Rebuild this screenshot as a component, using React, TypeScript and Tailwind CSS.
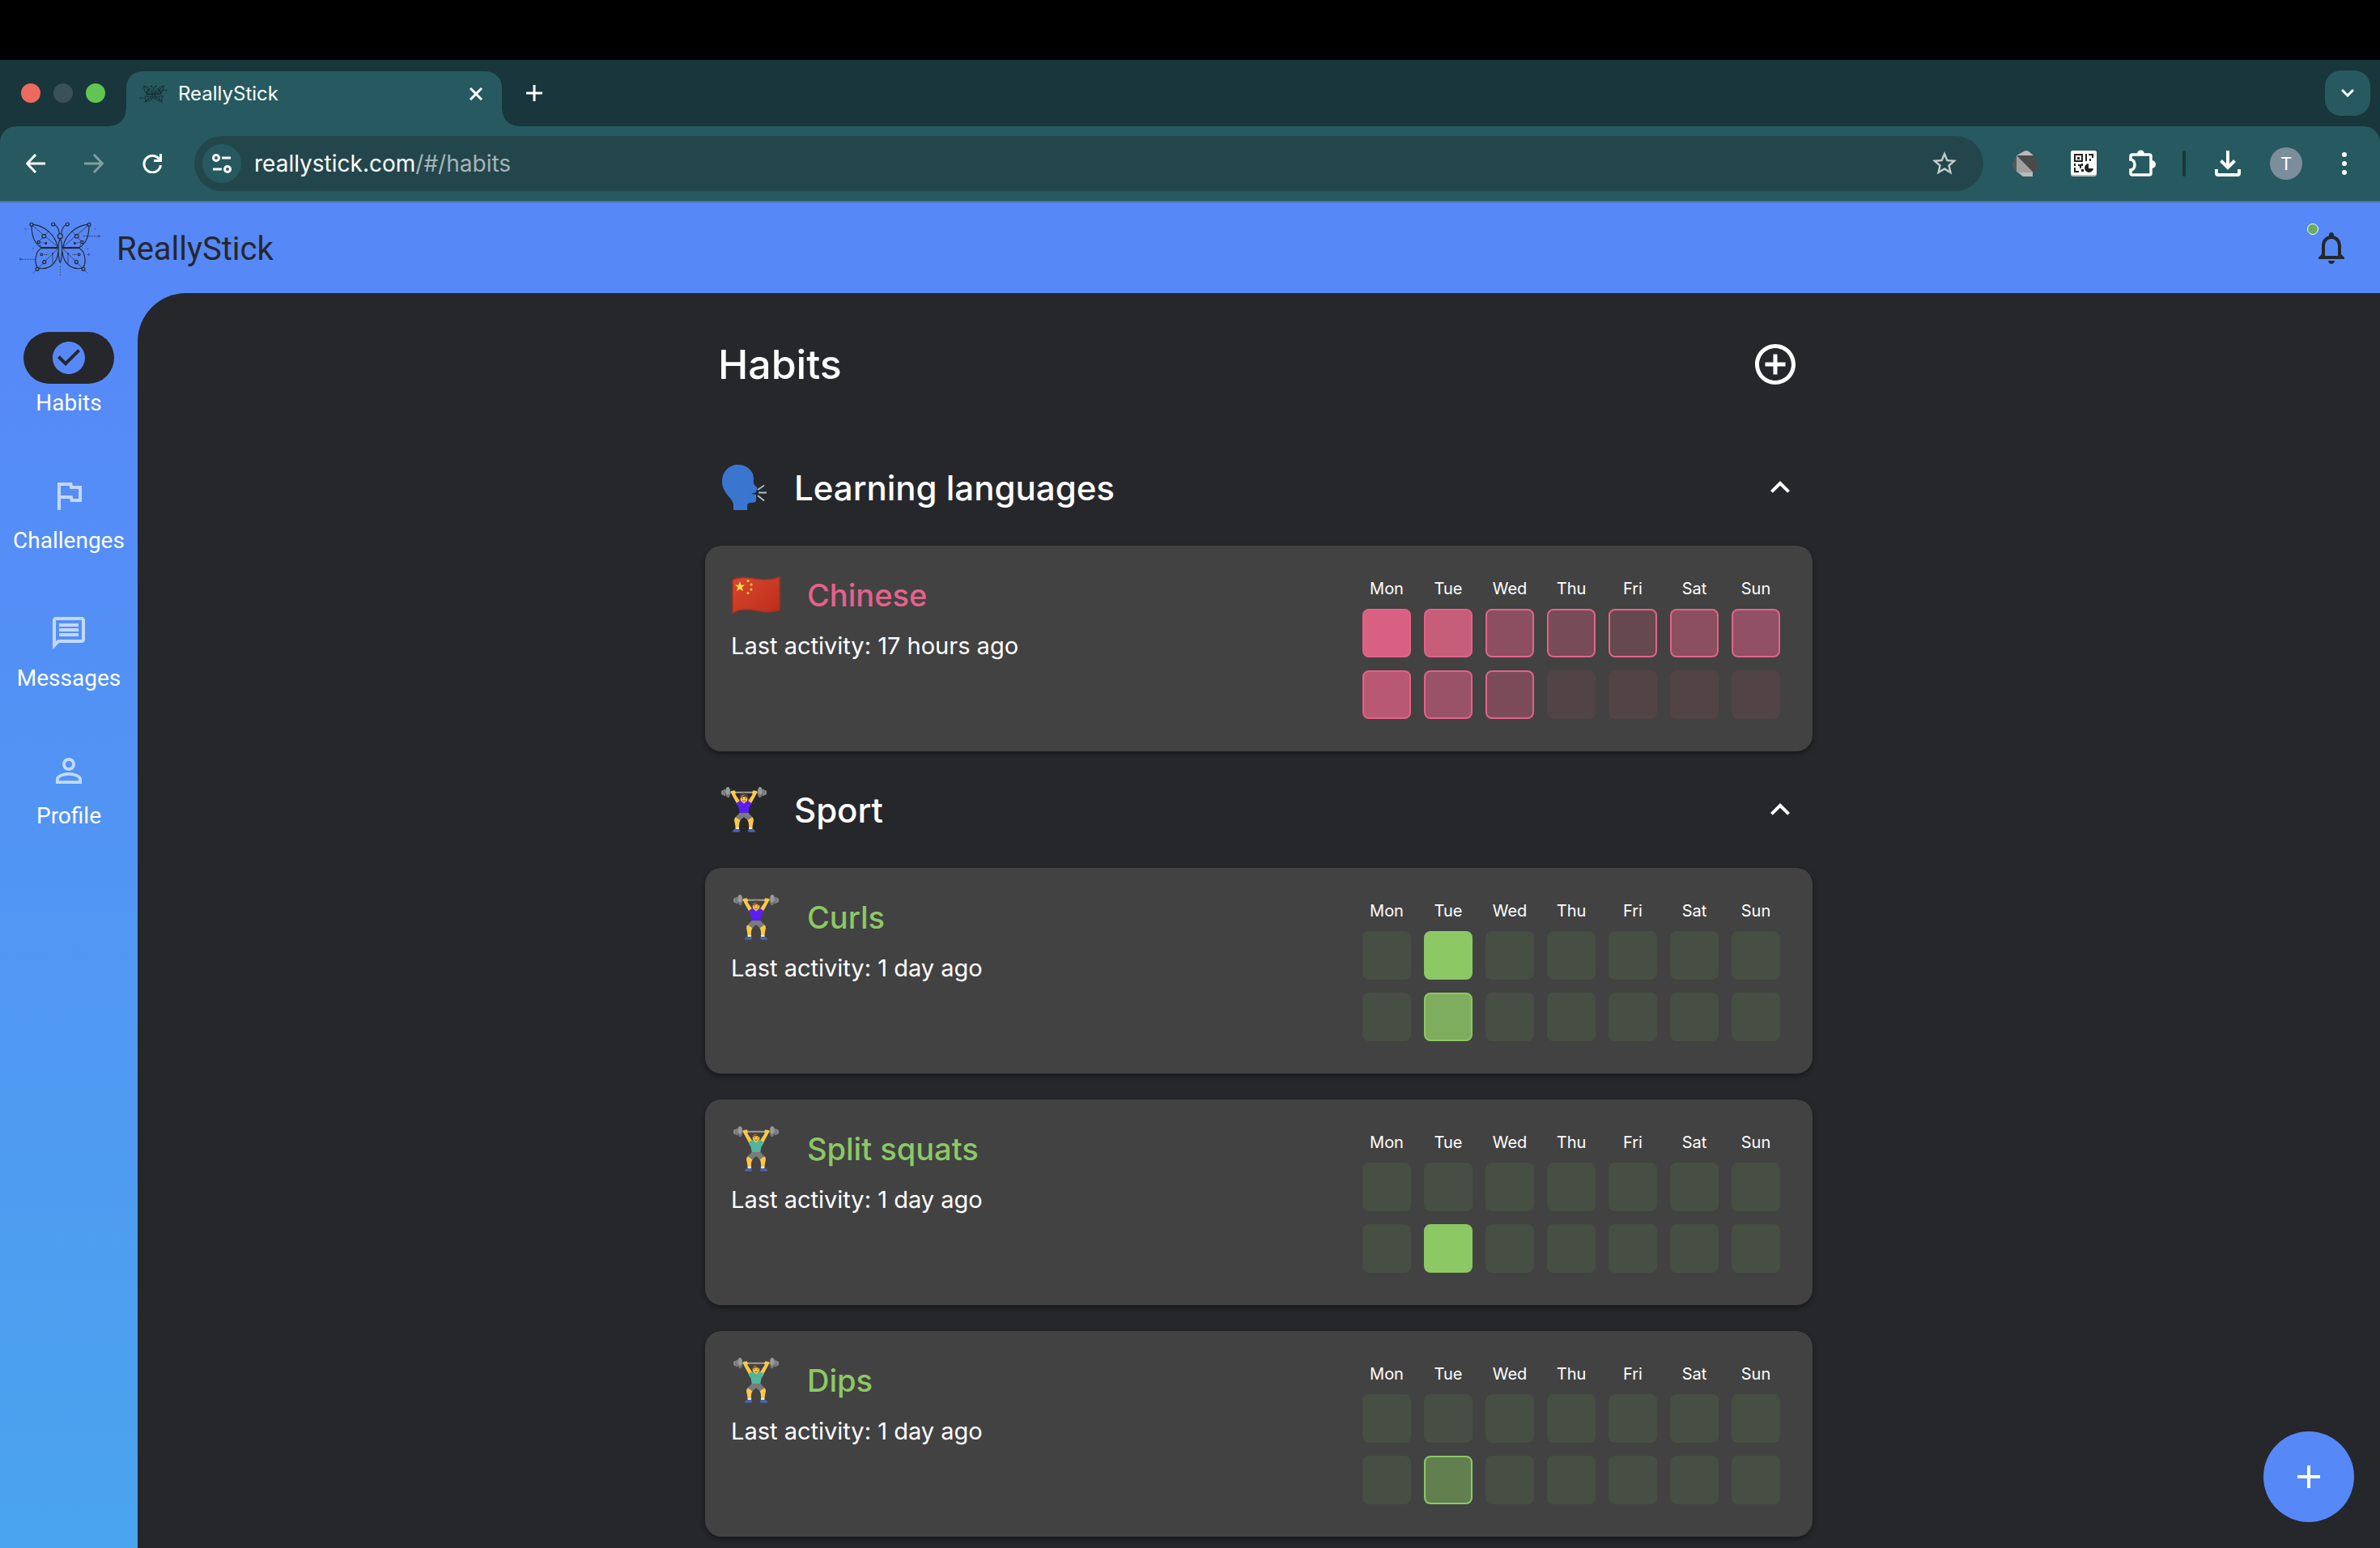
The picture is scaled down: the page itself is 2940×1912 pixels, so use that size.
import React from "react";
import {
  MdAdd,
  MdAddCircleOutline,
  MdCheckCircle,
  MdExpandLess,
  MdNotificationsNone,
  MdOutlineFlag,
  MdOutlineMessage,
  MdPersonOutline,
  MdStarBorder,
} from "react-icons/md";

type Tone = "pink" | "green";

interface Habit {
  name: string;
  icon: React.ReactNode;
  activity: string;
  tone: Tone;
  weeks: string[][];
}

const DAYS = ["Mon", "Tue", "Wed", "Thu", "Fri", "Sat", "Sun"];

const P0 = "bg-[#514346]";
const G0 = "bg-[#474e43]";
const PB = "border-[#e5628a]";
const GB = "border-[#8cc864]";

function Butterfly({ className }: { className: string }) {
  const half = (
    <g>
      <path d="M92 49C132 52 176 86 184 134L122 134C96 116 88 92 87 55" />
      <path d="M184 137H122C100 150 96 192 110 210C142 218 180 204 186 150" />
      <path d="M190 83C188 66 182 54 172 50" />
      <g strokeWidth="2">
        <path d="M91 53L184 132M133 92L152 72M133 92L113 114L122 130M184 139L110 212M165 157V194" />
        <path strokeDasharray="5 3" d="M113 114L140 118M124 160H150M103 220L90 232" />
      </g>
      <g fill="#5688f8">
        <circle cx="87" cy="49" r="6" />
        <circle cx="167" cy="48" r="6" />
        <circle cx="133" cy="92" r="7" />
        <circle cx="113" cy="114" r="5" />
        <circle cx="140" cy="118" r="3" />
        <circle cx="124" cy="160" r="4" />
        <circle cx="134" cy="188" r="6" />
        <circle cx="108" cy="214" r="6" />
      </g>
      <circle cx="141" cy="160" r="2" fill="currentColor" stroke="none" />
      <circle cx="165" cy="157" r="3" fill="currentColor" stroke="none" />
    </g>
  );
  return (
    <svg viewBox="0 0 390 270" className={className} fill="none" stroke="currentColor" strokeWidth="3.5" aria-hidden="true">
      {half}
      <g transform="translate(387 0) scale(-1 1)">{half}</g>
      <path fill="#5688f8" d="M193 102C184 112 184 172 193 190C202 172 202 112 193 102Z" />
      <circle cx="193" cy="92" r="9" fill="#5688f8" />
      <g strokeWidth="2">
        <circle cx="337" cy="92" r="3" />
        <circle cx="46" cy="177" r="3" />
        <circle cx="299" cy="160" r="3" />
        <circle cx="65" cy="65" r="3" opacity="0.5" />
        <path strokeDasharray="7 3" d="M50 178H102M278 92H333" />
        <path strokeDasharray="3 7" strokeWidth="3" d="M193 204V240" />
        <path strokeDasharray="3 5" opacity="0.4" d="M65 74V96" />
      </g>
      <g fill="currentColor" stroke="none" opacity="0.7">
        <circle cx="93" cy="138" r="2" />
        <circle cx="322" cy="65" r="2" />
        <circle cx="295" cy="138" r="2" />
      </g>
    </svg>
  );
}

function SpeakingHead() {
  return (
    <svg viewBox="0 0 56 56" className="size-14" aria-hidden="true">
      <path
        fill="#3a76d0"
        d="M15 56V50C15 41 1 36 1 21C1 8 10 0 21 0C32 0 40 8 40 17C39 24 41 25 44 28C45 30 44 31 43 32V34L37 36L43 37V43C43 48 40 46 36 47C33 47 32 49 32 51V56Z"
      />
      <path stroke="#a9c0c6" strokeWidth="1.8" d="M45 31L53 25.500M46 34.500H56M45 38L53 44.500" />
    </svg>
  );
}

function WeightLifter({ shirt, hair }: { shirt: string; hair: "long" | "short" }) {
  const weight = (
    <g>
      <ellipse cx="5" cy="21" rx="5" ry="9" fill="#8a8a8a" />
      <ellipse cx="12" cy="21" rx="6" ry="13" fill="#7c7c7c" />
      <ellipse cx="25" cy="20" rx="9" ry="20" fill="#757575" />
      <ellipse cx="24" cy="15" rx="8" ry="14" fill="#9a9a9a" />
    </g>
  );
  const limb = (
    <g>
      <path fill="#fdc847" d="M36 15L50 13Q56 20 52 27L70 54L58 63L40 30Q34 22 36 15Z" />
      <path fill="#fdc847" d="M55 110L72 121Q64 134 66 154H53Q52 140 48 124Q48 114 55 110Z" />
      <path fill="#e8e8e8" d="M53 150H66V158H53Z" />
      <path fill="#4666ae" d="M42 167Q42 157 54 156H68V167Z" />
    </g>
  );
  return (
    <svg viewBox="0 0 168 168" className="size-14" aria-hidden="true">
      <path fill="#9e9e9e" d="M30 17H138V23H30Z" />
      {weight}
      <g transform="translate(168 0) scale(-1 1)">{weight}</g>
      <path
        fill="#5b3b33"
        d={hair === "long" ? "M66 56Q64 22 84 22Q104 22 102 56Z" : "M69 42Q66 24 84 24Q102 24 99 42Z"}
      />
      {limb}
      <g transform="translate(168 0) scale(-1 1)">{limb}</g>
      <path fill={shirt} d="M55 61L69 51Q84 60 99 51L113 61L103 78L100 97H68L65 78Z" />
      <path fill="#fdc847" d="M76 52H92L84 62Z" />
      <ellipse cx="84" cy="44" rx="13" ry="14" fill="#fdc847" />
      <path fill="#5b3b33" d="M70 42Q72 32 92 29Q98 32 98 42Q92 36 84 36Q74 37 70 42Z" />
      <circle cx="78" cy="42" r="2" fill="#4a3530" />
      <circle cx="90" cy="42" r="2" fill="#4a3530" />
      <path stroke="#7b4a30" strokeWidth="2.500" fill="none" d="M78 50Q84 55 90 50" />
      <path fill="#7a7a7a" d="M68 96H100L115 112L98 124L84 112L70 124L53 112Z" />
    </svg>
  );
}

function ChinaFlag() {
  return (
    <svg viewBox="0 0 60 46" className="w-[60px]" aria-hidden="true">
      <defs>
        <linearGradient id="flag" x1="0" y1="0" x2="1" y2="1">
          <stop offset="0" stopColor="#d9492d" />
          <stop offset="1" stopColor="#bb2c1c" />
        </linearGradient>
      </defs>
      <path
        fill="url(#flag)"
        stroke="#a83222"
        strokeWidth="1.500"
        d="M1 4C10 0 18 1 29 3C40 5 50 4 59 1V41C50 45 41 44 30 42C18 40 10 40 1 45Z"
      />
      <path fill="#fbe04a" d="M10 6L11.500 10.500L16 10.500L12.500 13.500L14 18L10 15.500L6 18L7.500 13.500L4 10.500L8.500 10.500Z" />
      <g fill="#f5c33b">
        <circle cx="20" cy="5.500" r="1.600" />
        <circle cx="24" cy="10" r="1.600" />
        <circle cx="24" cy="16" r="1.600" />
        <circle cx="20" cy="20.500" r="1.600" />
      </g>
    </svg>
  );
}

const row = (empty: string, filled: Record<number, string> = {}) => DAYS.map((_, i) => filled[i] ?? empty);

const woman = <WeightLifter shirt="#5a1ff0" hair="long" />;
const man = <WeightLifter shirt="#52b59c" hair="short" />;

const SECTIONS: { title: string; icon: React.ReactNode; habits: Habit[] }[] = [
  {
    title: "Learning languages",
    icon: <SpeakingHead />,
    habits: [
      {
        name: "Chinese",
        icon: <ChinaFlag />,
        activity: "Last activity: 17 hours ago",
        tone: "pink",
        weeks: [
          ["bg-[#d86082]", "bg-[#c65d79]", "bg-[#8b4f61]", "bg-[#784b59]", "bg-[#664850]", "bg-[#8b4f61]", "bg-[#915065]"],
          row(P0, { 0: "bg-[#b95873]", 1: "bg-[#995268]", 2: "bg-[#7c4b5a]" }),
        ],
      },
    ],
  },
  {
    title: "Sport",
    icon: woman,
    habits: [
      {
        name: "Curls",
        icon: woman,
        activity: "Last activity: 1 day ago",
        tone: "green",
        weeks: [row(G0, { 1: "bg-[#8cc864]" }), row(G0, { 1: "bg-[#7ead5d]" })],
      },
      {
        name: "Split squats",
        icon: man,
        activity: "Last activity: 1 day ago",
        tone: "green",
        weeks: [row(G0), row(G0, { 1: "bg-[#8cc864]" })],
      },
      {
        name: "Dips",
        icon: man,
        activity: "Last activity: 1 day ago",
        tone: "green",
        weeks: [row(G0), row(G0, { 1: "bg-[#627f50]" })],
      },
    ],
  },
];

function HabitCard({ habit }: { habit: Habit }) {
  const border = habit.tone === "pink" ? PB : GB;
  return (
    <article className="flex items-start justify-between rounded-[20px] bg-[#424242] shadow-[0_3px_6px_rgba(0,0,0,0.4)]">
      <div className="flex flex-col gap-3 pt-8 pl-8">
        <div className="flex h-[58px] items-center gap-8">
          <span className="flex w-[62px] justify-center">{habit.icon}</span>
          <h3
            className={
              habit.tone === "pink"
                ? "text-[38px] leading-[44px] font-medium text-[#e5628a]"
                : "text-[38px] leading-[44px] font-medium text-[#8cc864]"
            }
          >
            {habit.name}
          </h3>
        </div>
        <p className="text-[29px] leading-[44px]">{habit.activity}</p>
      </div>
      <table className="m-6 border-separate border-spacing-4">
        <thead>
          <tr>
            {DAYS.map((d) => (
              <th key={d} scope="col" className="h-[22px] w-[60px] min-w-[60px] p-0 pt-1 text-center text-[20px] leading-[18px] font-normal">
                {d}
              </th>
            ))}
          </tr>
        </thead>
        <tbody>
          {habit.weeks.map((week, w) => (
            <tr key={w}>
              {week.map((cell, i) => (
                <td key={i} className="p-0">
                  <div
                    className={
                      cell === P0 || cell === G0
                        ? `size-[60px] rounded-lg ${cell}`
                        : `size-[60px] rounded-lg border-2 ${border} ${cell}`
                    }
                  />
                </td>
              ))}
            </tr>
          ))}
        </tbody>
      </table>
    </article>
  );
}

function TabStrip() {
  return (
    <div className="flex h-[82px] items-center bg-[#18363b]">
      <div className="flex w-[156px] gap-4 pl-[26px]">
        <button aria-label="Close window" className="size-6 rounded-full bg-[#ed6a5e]" />
        <button aria-label="Minimize window" className="size-6 rounded-full bg-[#395257]" />
        <button aria-label="Zoom window" className="size-6 rounded-full bg-[#61c554]" />
      </div>
      <div className="relative flex h-[68px] w-[464px] items-center self-end rounded-t-[20px] bg-[#265a60] pr-6 pb-3 pl-3">
        <span className="absolute bottom-0 -left-5 size-5 bg-[radial-gradient(circle_at_0_0,#18363b_19px,#265a60_20px)]" />
        <span className="absolute -right-5 bottom-0 size-5 bg-[radial-gradient(circle_at_100%_0,#18363b_19px,#265a60_20px)]" />
        <Butterfly className="w-11 text-[#102326] [&_circle]:fill-none [&_g]:stroke-[7] [&_path]:fill-none" />
        <span className="ml-2 flex-1 text-[24px] text-white">ReallyStick</span>
        <button aria-label="Close tab">
          <svg viewBox="0 0 16 16" className="size-4" stroke="#fff" strokeWidth="3" aria-hidden="true">
            <path d="M1 1L15 15M15 1L1 15" />
          </svg>
        </button>
      </div>
      <button aria-label="New tab" className="ml-[30px]">
        <svg viewBox="0 0 20 20" className="size-5" stroke="#fff" strokeWidth="3" aria-hidden="true">
          <path d="M10 0V20M0 10H20" />
        </svg>
      </button>
      <button aria-label="Search tabs" className="mr-3 ml-auto flex size-14 items-center justify-center rounded-[20px] bg-[#265a60]">
        <svg viewBox="0 0 16 10" className="w-4" fill="none" stroke="#fff" strokeWidth="3" aria-hidden="true">
          <path d="M1 1L8 8L15 1" />
        </svg>
      </button>
    </div>
  );
}

function Toolbar() {
  return (
    <div className="bg-[#18363b]">
      <div className="flex h-[94px] items-center rounded-t-[20px] border-b-2 border-[#4b7b80] bg-[#265a60] pr-10 pl-8">
        <button aria-label="Back">
          <svg viewBox="0 0 24 24" className="size-6" fill="none" stroke="#fff" strokeWidth="3" aria-hidden="true">
            <path d="M24 12H2M12 1L1.500 12L12 23" />
          </svg>
        </button>
        <button aria-label="Forward" className="ml-12">
          <svg viewBox="0 0 24 24" className="size-6" fill="none" stroke="#809ea2" strokeWidth="3" aria-hidden="true">
            <path d="M0 12H22M12 1L22.500 12L12 23" />
          </svg>
        </button>
        <button aria-label="Reload" className="ml-12">
          <svg viewBox="0 0 24 24" className="size-6" fill="none" stroke="#fff" strokeWidth="3" aria-hidden="true">
            <path d="M21.500 8A10.300 10.300 0 1 0 22.500 14" />
            <path d="M22.500 0V8.500H14" />
          </svg>
        </button>
        <div className="ml-10 flex h-[68px] flex-1 items-center rounded-full bg-[#23464c] pr-[30px] pl-[10px]">
          <button aria-label="View site information" className="flex size-12 items-center justify-center rounded-full bg-[#265a60]">
            <svg viewBox="0 0 26 24" className="w-[26px]" fill="none" stroke="#fff" strokeWidth="3" aria-hidden="true">
              <circle cx="6" cy="5" r="3.500" />
              <circle cx="20" cy="19" r="3.500" />
              <path d="M13 5H24M2 19H13" />
            </svg>
          </button>
          <div role="textbox" aria-label="Address" className="ml-4 flex-1 text-[28px] text-white">
            reallystick.com<span className="text-[#a4b5b8]">/#/habits</span>
          </div>
          <button aria-label="Bookmark this tab">
            <MdStarBorder className="size-9 text-[#c3cbcc]" />
          </button>
        </div>
        <button aria-label="Dart extension" className="ml-9">
          <svg viewBox="0 0 32 32" className="size-8" aria-hidden="true">
            <path fill="#b9b9b9" d="M5 6L14 1Q17 -1 20 1L26 6Z" />
            <path fill="#5f5453" d="M0 17L5 6V27L1 20Z" />
            <path fill="#a0a0a0" d="M5 6L25 26V32H13L5 26Z" />
            <path fill="#4a4a4a" d="M6 6H23L31 13V26H25Z" />
            <path fill="#b9b9b9" d="M8 27H25V32H13Z" />
          </svg>
        </button>
        <button aria-label="QR code extension" className="ml-10">
          <svg viewBox="0 0 32 32" className="size-8" aria-hidden="true">
            <rect width="32" height="32" rx="3" fill="#bdbdbd" />
            <rect width="32" height="30" rx="3" fill="#fff" />
            <g fill="none" stroke="#222" strokeWidth="2">
              <rect x="5" y="5" width="9" height="8" />
              <path d="M19 4V13M22 5H27V9M24 10V13M5 16V19M5 21V26H10M9 18H12V22M14 16V19" />
            </g>
            <g fill="#222">
              <rect x="8" y="8" width="3" height="3" />
              <rect x="13" y="23" width="3" height="3" />
              <path d="M22 16V22H28A5.500 5.500 0 1 1 22 16Z" />
            </g>
          </svg>
        </button>
        <button aria-label="Extensions" className="ml-10">
          <svg viewBox="0 0 34 34" className="size-[34px]" aria-hidden="true">
            <path
              fill="none"
              stroke="#fff"
              strokeWidth="3.500"
              d="M4 6H25A2 2 0 0 1 27 8V29A2 2 0 0 1 25 31H4A2 2 0 0 1 2 29V25A5 6.500 0 0 0 2 12V8A2 2 0 0 1 4 6Z"
            />
            <path fill="#fff" d="M10 5A4.500 4.500 0 0 1 19 5ZM28 13A4.500 4.500 0 0 1 28 23Z" />
          </svg>
        </button>
        <span className="ml-8 h-8 w-1 rounded-full bg-[#18363b]" />
        <button aria-label="Downloads" className="ml-9">
          <svg viewBox="0 0 32 32" className="size-8" fill="none" stroke="#fff" strokeWidth="4" aria-hidden="true">
            <path d="M16 0V20M7.500 12.500L16 21L24.500 12.500M2 23V28Q2 30 4 30H28Q30 30 30 28V23" />
          </svg>
        </button>
        <button aria-label="Profile T" className="ml-9 flex size-10 items-center justify-center rounded-full bg-[#7c8e9b] text-[22px] text-white">
          T
        </button>
        <button aria-label="Browser menu" className="ml-12">
          <svg viewBox="0 0 8 28" className="w-2" fill="#fff" aria-hidden="true">
            <circle cx="4" cy="3" r="3" />
            <circle cx="4" cy="14" r="3" />
            <circle cx="4" cy="25" r="3" />
          </svg>
        </button>
      </div>
    </div>
  );
}

const NAV = [
  { label: "Habits", Icon: MdCheckCircle, active: true },
  { label: "Challenges", Icon: MdOutlineFlag, active: false },
  { label: "Messages", Icon: MdOutlineMessage, active: false },
  { label: "Profile", Icon: MdPersonOutline, active: false },
];

export default function App() {
  return (
    <div className="flex h-screen flex-col overflow-hidden bg-[#5688f8] font-['Inter',sans-serif]">
      <div className="h-[74px] shrink-0 bg-black" />
      <TabStrip />
      <Toolbar />
      <header className="flex h-28 shrink-0 items-center bg-[#5688f8] pr-9 pl-[10px] font-['Roboto',sans-serif] text-[#26272b]">
        <Butterfly className="w-[130px]" />
        <span className="ml-1 pt-1 text-[40px]">ReallyStick</span>
        <button aria-label="Notifications" className="relative ml-auto">
          <MdNotificationsNone className="size-12" />
          <span className="absolute -top-[6px] -left-[6px] size-[14px] rounded-full border border-white bg-[#67ad5b]" />
        </button>
      </header>
      <div className="flex min-h-0 flex-1 bg-linear-to-b from-[#5688f8] to-[#4aa4ee]">
        <nav className="flex w-[170px] shrink-0 flex-col gap-16 pt-12 font-['Roboto',sans-serif] text-white">
          {NAV.map(({ label, Icon, active }) => (
            <a key={label} href={`#/${label.toLowerCase()}`} className="flex flex-col items-center gap-1.5">
              <span
                className={
                  active
                    ? "flex h-16 w-28 items-center justify-center rounded-full bg-[#26272b] text-[#5688f8]"
                    : "flex h-16 w-28 items-center justify-center text-white/65"
                }
              >
                <Icon className="size-12" />
              </span>
              <span className="text-[28px] leading-9">{label}</span>
            </a>
          ))}
        </nav>
        <main className="relative flex min-w-0 flex-1 justify-center overflow-hidden rounded-tl-[60px] bg-[#26272b] text-white">
          <div className="flex w-full max-w-[1368px] flex-col pt-12">
            <div className="flex h-20 items-center justify-between px-4">
              <h1 className="text-[50px] font-medium">Habits</h1>
              <button aria-label="Add habit">
                <MdAddCircleOutline className="size-[60px]" />
              </button>
            </div>
            <div className="flex flex-col pt-10">
              {SECTIONS.map((s) => (
                <section key={s.title}>
                  <div className="flex h-36 items-center pr-4 pl-5">
                    {s.icon}
                    <h2 className="ml-[34px] flex-1 text-[42px] font-medium">{s.title}</h2>
                    <button aria-label={`Collapse ${s.title}`}>
                      <MdExpandLess className="size-12" />
                    </button>
                  </div>
                  <div className="flex flex-col gap-8">
                    {s.habits.map((h) => (
                      <HabitCard key={h.name} habit={h} />
                    ))}
                  </div>
                </section>
              ))}
            </div>
          </div>
          <button aria-label="Add" className="absolute right-8 bottom-8 flex size-28 items-center justify-center rounded-full bg-[#5688f8]">
            <MdAdd className="size-12" />
          </button>
        </main>
      </div>
    </div>
  );
}
